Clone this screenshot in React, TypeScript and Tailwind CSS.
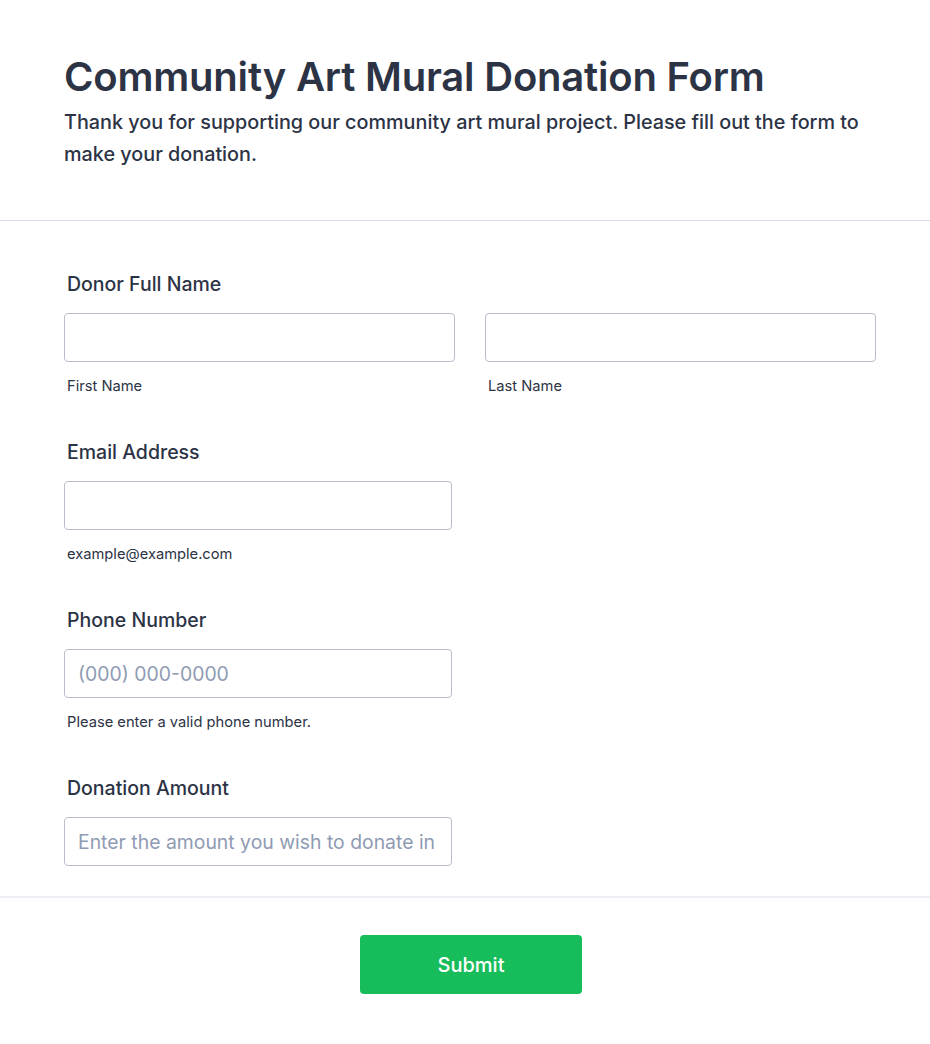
import React from "react";

const Field = ({
  label,
  sub,
  placeholder,
}: {
  label: string;
  sub?: string;
  placeholder?: string;
}) => (
  <div className="flex flex-col">
    <label className="pl-[3px] text-[19.5px] font-medium leading-[28px] text-[#2c3345]">{label}</label>
    <input
      type="text"
      placeholder={placeholder}
      className="mt-[15px] h-[49px] w-[388px] rounded-[4px] border border-[#b8bdc9] bg-white pl-[13px] pr-[11px] text-[19.4px] text-[#2c3345] placeholder:text-[#8f9bb3] outline-none"
    />
    {sub && <span className="mt-[14px] pl-[3px] text-[14.7px] leading-[20px] text-[#2c3345]">{sub}</span>}
  </div>
);

export default function App() {
  return (
    <div className="min-h-[1044px] bg-white font-['Inter',sans-serif] text-[#2c3345]">
      <header className="px-[64px] pt-[53px] pb-[50px]">
        <h1 className="text-[40px] font-semibold leading-[48px] tracking-[-0.2px]">Community Art Mural Donation Form</h1>
        <p className="mt-[5px] text-[19.8px] font-medium leading-[32px]">
          Thank you for supporting our community art mural project. Please fill out the form to make your donation.
        </p>
      </header>
      <div className="h-px bg-[#d8dae9]" />

      <form className="flex flex-col gap-[42px] px-[64px] pt-[49px] pb-[30px]">
        <div className="flex flex-col">
          <label className="pl-[3px] text-[19.5px] font-medium leading-[28px]">Donor Full Name</label>
          <div className="mt-[15px] flex gap-[30px]">
            <div className="flex flex-col">
              <input type="text" className="h-[49px] w-[391px] rounded-[4px] border border-[#b8bdc9] px-[13px] text-[19.4px] outline-none" />
              <span className="mt-[14px] pl-[3px] text-[14.7px] leading-[20px]">First Name</span>
            </div>
            <div className="flex flex-col">
              <input type="text" className="h-[49px] w-[391px] rounded-[4px] border border-[#b8bdc9] px-[13px] text-[19.4px] outline-none" />
              <span className="mt-[14px] pl-[3px] text-[14.7px] leading-[20px]">Last Name</span>
            </div>
          </div>
        </div>
        <Field label="Email Address" sub="example@example.com" />
        <Field label="Phone Number" sub="Please enter a valid phone number." placeholder="(000) 000-0000" />
        <Field label="Donation Amount" placeholder="Enter the amount you wish to donate in USD" />
      </form>

      <div className="h-[2px] bg-[#eceef3]" />
      <div className="flex justify-center pt-[37px] pl-[12px]">
        <button className="h-[59px] w-[222px] rounded-[4px] bg-[#18bd5b] text-[20px] font-medium text-white">Submit</button>
      </div>
    </div>
  );
}
